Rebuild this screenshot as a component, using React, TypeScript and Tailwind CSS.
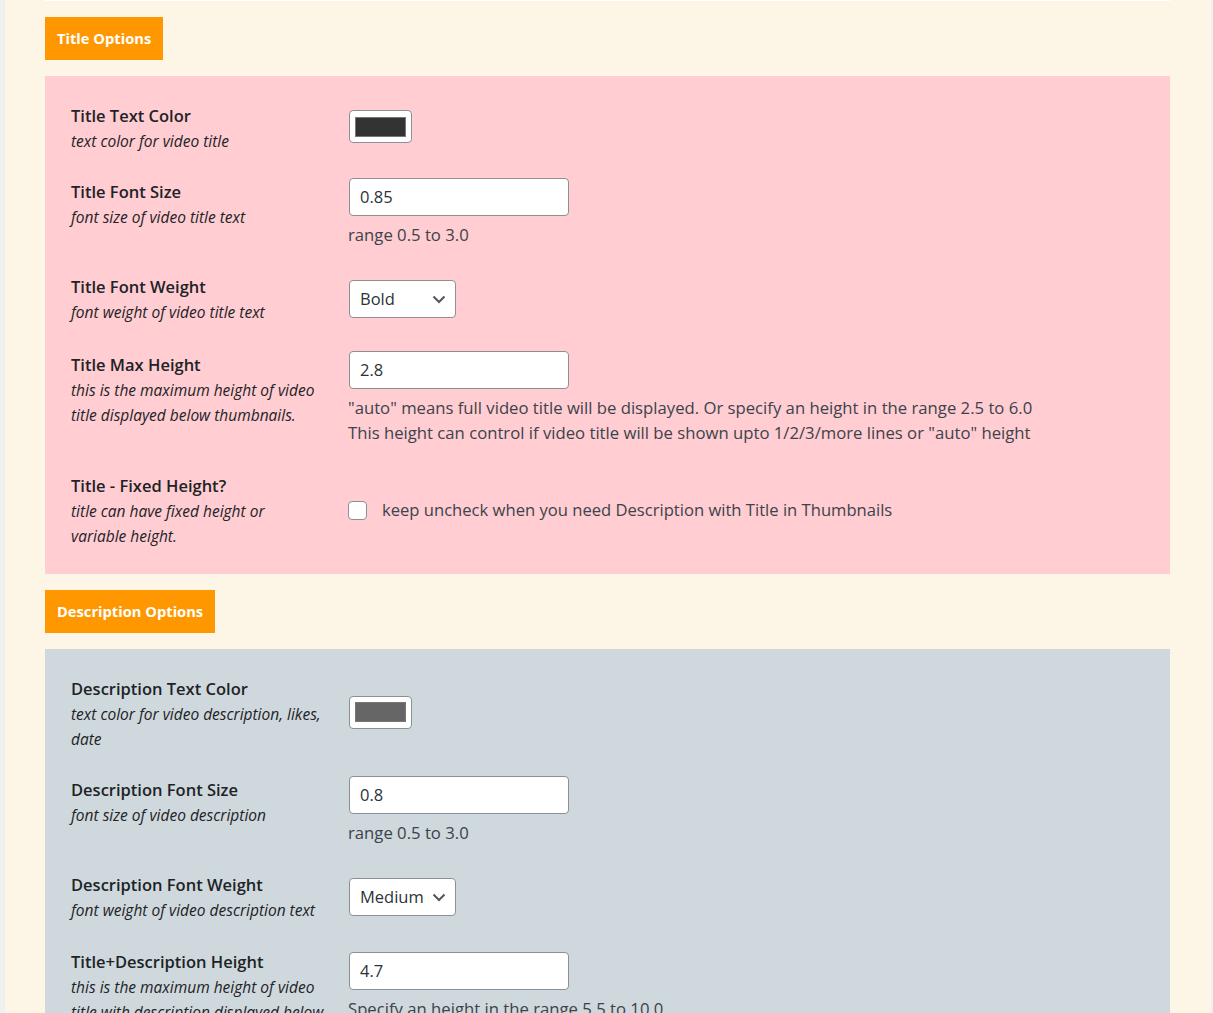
import type { ReactNode } from "react";

type RowProps = {
  label: string;
  desc: string[];
  className?: string;
  children: ReactNode;
};

function Row({ label, desc, className = "", children }: RowProps) {
  return (
    <div className={`flex items-start ${className}`}>
      <div className="w-[278px] shrink-0 whitespace-nowrap pt-px">
        <div className="text-[16.5px] leading-[26px] font-semibold text-[#1d2327]">{label}</div>
        {desc.map((line) => (
          <div key={line} className="text-[15.5px] leading-[25px] italic text-[#1d2327]">
            {line}
          </div>
        ))}
      </div>
      <div className="self-center">{children}</div>
    </div>
  );
}

function Swatch({ color }: { color: string }) {
  return (
    <div className="mb-[3px] flex h-[33px] w-[63px] items-center justify-center rounded-[4px] border border-[#8c8f94] bg-white">
      <div className="h-[20px] w-[51px] border border-[#777]" style={{ background: color }} />
    </div>
  );
}

function TextInput({ value }: { value: string }) {
  return (
    <div className="flex h-[38px] w-[220px] items-center rounded-[4px] border border-[#8c8f94] bg-white pl-[10px] text-[16.5px] text-[#2c3338]">
      {value}
    </div>
  );
}

function Select({ value }: { value: string }) {
  return (
    <div className="flex h-[38px] w-[107px] items-center justify-between rounded-[4px] border border-[#8c8f94] bg-white pl-[10px] pr-[9px] text-[16.5px] text-[#2c3338]">
      <span>{value}</span>
      <svg width="14" height="9" viewBox="0 0 14 9" fill="none">
        <path d="M1.5 1.5 7 7l5.5-5.5" stroke="#50575e" strokeWidth="2" />
      </svg>
    </div>
  );
}

function Help({ lines }: { lines: string[] }) {
  return (
    <div className="-ml-px mt-[6px] whitespace-nowrap text-[16.7px] leading-[25px] text-[#3c434a]">
      {lines.map((l) => (
        <div key={l}>{l}</div>
      ))}
    </div>
  );
}

function Badge({ children }: { children: ReactNode }) {
  return (
    <div className="inline-flex h-[43px] items-center bg-[#ff9800] px-[12px] text-[14.7px] font-bold text-white">
      {children}
    </div>
  );
}

export default function App() {
  return (
    <div
      className="min-h-screen bg-[#f0f0f1] pl-[5px] pr-[2px]"
      style={{ fontFamily: '"Open Sans", "Noto Sans", sans-serif' }}
    >
      <div className="bg-[#fdf5e6] pl-[40px] pr-[41px] pb-10">
        <div className="h-px bg-white" />

        <div className="mt-[16px]">
          <Badge>Title Options</Badge>
        </div>
        <div className="mt-[16px] bg-[#ffcdd2] pl-[26px] pt-[26px] pb-[25px]">
          <Row label="Title Text Color" desc={["text color for video title"]}>
            <Swatch color="#333333" />
          </Row>
          <Row className="mt-[24px]" label="Title Font Size" desc={["font size of video title text"]}>
            <TextInput value="0.85" />
            <Help lines={["range 0.5 to 3.0"]} />
          </Row>
          <Row className="mt-[26px]" label="Title Font Weight" desc={["font weight of video title text"]}>
            <Select value="Bold" />
          </Row>
          <Row
            className="mt-[26px]"
            label="Title Max Height"
            desc={["this is the maximum height of video", "title displayed below thumbnails."]}
          >
            <TextInput value="2.8" />
            <Help
              lines={[
                '"auto" means full video title will be displayed. Or specify an height in the range 2.5 to 6.0',
                'This height can control if video title will be shown upto 1/2/3/more lines or "auto" height',
              ]}
            />
          </Row>
          <Row
            className="mt-[27px]"
            label="Title - Fixed Height?"
            desc={["title can have fixed height or", "variable height."]}
          >
            <label className="flex items-center gap-[15px] text-[16.6px] text-[#3c434a]">
              <span className="-ml-px h-[19px] w-[19px] rounded-[4px] border border-[#8c8f94] bg-white" />
              keep uncheck when you need Description with Title in Thumbnails
            </label>
          </Row>
        </div>

        <div className="mt-[16px]">
          <Badge>Description Options</Badge>
        </div>
        <div className="mt-[16px] bg-[#cfd8dc] pl-[26px] pt-[26px] pb-[25px]">
          <Row
            label="Description Text Color"
            desc={["text color for video description, likes,", "date"]}
          >
            <Swatch color="#666666" />
          </Row>
          <Row className="mt-[24px]" label="Description Font Size" desc={["font size of video description"]}>
            <TextInput value="0.8" />
            <Help lines={["range 0.5 to 3.0"]} />
          </Row>
          <Row
            className="mt-[26px]"
            label="Description Font Weight"
            desc={["font weight of video description text"]}
          >
            <Select value="Medium" />
          </Row>
          <Row
            className="mt-[25px]"
            label="Title+Description Height"
            desc={[
              "this is the maximum height of video",
              "title with description displayed below",
              "thumbnails.",
            ]}
          >
            <TextInput value="4.7" />
            <Help
              lines={[
                "Specify an height in the range 5.5 to 10.0",
                "This height is used when Title - Fixed Height is unchecked",
              ]}
            />
          </Row>
        </div>
      </div>
    </div>
  );
}
